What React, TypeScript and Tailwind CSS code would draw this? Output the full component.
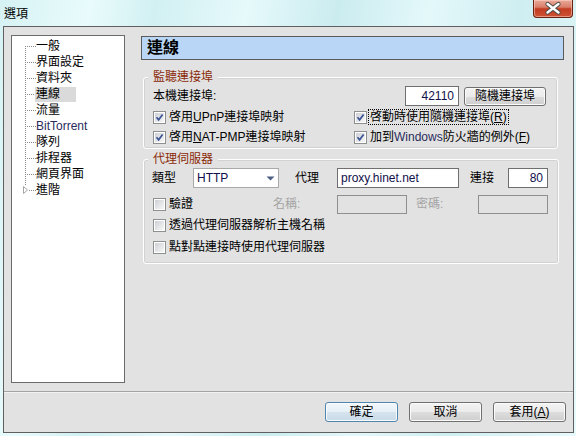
import React from 'react';

const treeItems = ['一般', '界面設定', '資料夾', '連線', '流量', 'BitTorrent', '隊列', '排程器', '網頁界面', '進階'];

function TreeRow({ label, index, total }: { label: string; index: number; total: number }) {
  const first = index === 0;
  const last = index === total - 1;
  const selected = label === '連線';
  const latin = label === 'BitTorrent';
  return (
    <div className="flex h-[16px] items-center pl-[10px]">
      <svg width="14" height="16" viewBox="0 0 14 16" className="shrink-0">
        {last ? (
          <>
            <line x1="3.5" y1="0" x2="3.5" y2="4" stroke="#8a8a8a" strokeDasharray="1 1" />
            <path d="M1.5 4.5 L1.5 11.5 L5.5 8 Z" fill="#ffffff" stroke="#a6a6a6" />
            <line x1="7" y1="8.5" x2="14" y2="8.5" stroke="#8a8a8a" strokeDasharray="1 1" />
          </>
        ) : (
          <>
            <line x1="3.5" y1={first ? 8 : 0} x2="3.5" y2="16" stroke="#8a8a8a" strokeDasharray="1 1" />
            <line x1="5" y1="8.5" x2="14" y2="8.5" stroke="#8a8a8a" strokeDasharray="1 1" />
          </>
        )}
      </svg>
      {selected ? (
        <span className="-ml-[1px] flex h-[15px] w-[41px] items-center bg-[#dadada] pl-[1px]">{label}</span>
      ) : (
        <span className={latin ? 'text-[#2a2c5c]' : ''}>{label}</span>
      )}
    </div>
  );
}

function Check({ checked }: { checked?: boolean }) {
  return (
    <span className="flex h-[13px] w-[13px] shrink-0 items-center justify-center border border-[#8e8f8f] bg-white">
      <span className="flex h-[9px] w-[9px] items-center justify-center bg-[linear-gradient(135deg,#cdd0d5,#f7f7f7)]">
        {checked && (
          <svg width="9" height="9" viewBox="0 0 9 9">
            <path d="M1.5 4.2 L3.6 6.8 L7.6 1.4" fill="none" stroke="#3c5395" strokeWidth="1.7" />
          </svg>
        )}
      </span>
    </span>
  );
}

function CheckItem({ checked, children, focus }: { checked?: boolean; children: React.ReactNode; focus?: boolean }) {
  return (
    <div className="flex h-[20px] items-center gap-[2px]">
      <Check checked={checked} />
      <span className={focus ? 'px-[1px] outline-1 outline-dotted outline-black' : 'px-[1px]'}>{children}</span>
    </div>
  );
}

function Btn({ children, primary, className = '' }: { children: React.ReactNode; primary?: boolean; className?: string }) {
  return (
    <div
      className={
        'flex items-center justify-center rounded-[3px] border shadow-[inset_0_0_0_1px_#fbfbfb] ' +
        (primary
          ? 'border-[#4f86b0] bg-[linear-gradient(#f1f7fb_0%,#e6f0f7_50%,#d5e4ef_50%,#c9dbe8_100%)] '
          : 'border-[#707070] bg-[linear-gradient(#f3f3f3_0%,#ebebeb_50%,#dddddd_50%,#cfcfcf_100%)] ') +
        className
      }
    >
      {children}
    </div>
  );
}

export default function App() {
  return (
    <div className="flex h-[436px] w-[576px] flex-col overflow-hidden bg-[linear-gradient(100deg,#d6f2f4_0%,#e9fbfc_14%,#d2f0f2_24%,#e6f9fb_38%,#cbecef_52%,#e4f8fa_66%,#cfeef1_80%,#e8fafb_100%)] font-['Liberation_Sans','Noto_Sans_CJK_TC',sans-serif] text-[12px] leading-[14px] text-black">
      {/* title bar */}
      <div className="flex h-[26px] shrink-0 items-start">
        <div className="pl-[4px] pt-[8px] text-[12px] leading-[13px] text-black">選項</div>
        <div className="ml-auto mr-[3px] h-[18px] w-[40px] rounded-b-[4px] border border-t-0 border-[#6a2013] bg-[linear-gradient(#e9a999_0%,#d97f69_42%,#c23c22_52%,#cf5234_100%)] shadow-[inset_0_0_0_1px_rgba(255,220,210,0.5)]">
          <svg width="38" height="17" viewBox="0 0 38 17">
            <path d="M13.5 4 L24.5 12.5 M24.5 4 L13.5 12.5" stroke="#4a4a4a" strokeWidth="4.2" strokeLinecap="round" />
            <path d="M13.5 4 L24.5 12.5 M24.5 4 L13.5 12.5" stroke="#ffffff" strokeWidth="2.4" strokeLinecap="round" />
          </svg>
        </div>
      </div>

      {/* client area */}
      <div className="ml-[3px] flex h-[407px] w-[571px] flex-col border border-[#5f5f5f] bg-[#e2e2e2]">
        <div className="flex pl-[7px] pt-[8px]">
          {/* tree */}
          <div className="h-[348px] w-[114px] shrink-0 border border-[#6b6b6b] bg-white pt-[2px]">
            {treeItems.map((t, i) => (
              <TreeRow key={t} label={t} index={i} total={treeItems.length} />
            ))}
          </div>

          {/* right panel */}
          <div className="ml-[16px] mt-[1px] w-[423px]">
            <div className="flex h-[24px] items-center border border-[#5a5a5a] bg-[#b9d6f6] pl-[5px] text-[16px] font-bold leading-[18px]">
              連線
            </div>

            {/* group 1 */}
            <fieldset className="ml-[2px] mt-[10px] w-[415px] rounded-[3px] border border-white pb-[1px] pl-[9px] pr-[11px] shadow-[inset_0_0_0_1px_#d2d2d2]">
              <legend className="-ml-[5px] bg-[#e2e2e2] px-[5px] leading-[14px] text-[#8a2a08]">監聽連接埠</legend>
              <div className="mt-[2px] flex h-[20px] items-center">
                <span>本機連接埠:</span>
                <div className="ml-auto flex h-[20px] w-[54px] items-center justify-end border border-[#6f6f6f] bg-white pr-[4px] text-[#10104a]">
                  42110
                </div>
                <Btn className="ml-[5px] h-[19px] w-[82px]">隨機連接埠</Btn>
              </div>
              <div className="mt-[1px] grid grid-cols-[201px_1fr]">
                <CheckItem checked>
                  啓用<span className="underline">U</span>PnP連接埠映射
                </CheckItem>
                <CheckItem checked focus>
                  啓動時使用隨機連接埠(<span className="underline">R</span>)
                </CheckItem>
                <CheckItem checked>
                  啓用<span className="underline">N</span>AT-PMP連接埠映射
                </CheckItem>
                <CheckItem checked>
                  加到<span className="text-[#2a2c5c]">Windows</span>防火牆的例外(<span className="underline">F</span>)
                </CheckItem>
              </div>
            </fieldset>

            {/* group 2 */}
            <fieldset className="ml-[2px] mt-[3px] w-[415px] rounded-[3px] border border-white pb-[6px] pl-[9px] pr-[10px] shadow-[inset_0_0_0_1px_#d2d2d2]">
              <legend className="-ml-[5px] bg-[#e2e2e2] px-[5px] leading-[14px] text-[#8a2a08]">代理伺服器</legend>
              <div className="mt-[2px] flex h-[20px] items-center">
                <span className="-ml-[1px] w-[25px]">類型</span>
                <div className="ml-[16px] flex h-[20px] w-[86px] items-center border border-[#a9a9a9] bg-white pl-[3px] pr-[3px] text-[#10104a]">
                  <span>HTTP</span>
                  <svg className="ml-auto" width="9" height="5" viewBox="0 0 9 5">
                    <path d="M0.5 0.5 L8.5 0.5 L4.5 4.5 Z" fill="#4d5f82" />
                  </svg>
                </div>
                <span className="ml-[16px] w-[24px]">代理</span>
                <div className="ml-[18px] flex h-[20px] w-[122px] items-center border border-[#6f6f6f] bg-white pl-[3px] text-[#10104a]">
                  proxy.hinet.net
                </div>
                <span className="ml-[11px] w-[24px]">連接</span>
                <div className="ml-[14px] flex h-[20px] w-[40px] items-center justify-end border border-[#6f6f6f] bg-white pr-[4px] text-[#10104a]">
                  80
                </div>
              </div>
              <div className="mt-[6px] flex h-[20px] items-center">
                <div className="w-[120px]">
                  <CheckItem>驗證</CheckItem>
                </div>
                <span className="w-[64px] text-[#a4a4a4]">名稱:</span>
                <div className="h-[19px] w-[70px] border border-[#8f8f8f] bg-[#e2e2e2]" />
                <span className="ml-[9px] w-[62px] text-[#a4a4a4]">密碼:</span>
                <div className="h-[19px] w-[70px] border border-[#8f8f8f] bg-[#e2e2e2]" />
              </div>
              <div className="mt-[1px]">
                <CheckItem>透過代理伺服器解析主機名稱</CheckItem>
              </div>
              <div className="mt-[2px]">
                <CheckItem>點對點連接時使用代理伺服器</CheckItem>
              </div>
            </fieldset>
          </div>
        </div>

        <div className="mt-[8px] h-[2px] border-b border-t border-b-[#f2f2f2] border-t-[#a3a3a3]" />

        <div className="flex justify-end gap-[11px] pr-[7px] pt-[9px]">
          <Btn primary className="h-[20px] w-[73px]">確定</Btn>
          <Btn className="h-[20px] w-[73px]">取消</Btn>
          <Btn className="h-[20px] w-[73px]">
            套用(<span className="underline">A</span>)
          </Btn>
        </div>
      </div>
    </div>
  );
}
